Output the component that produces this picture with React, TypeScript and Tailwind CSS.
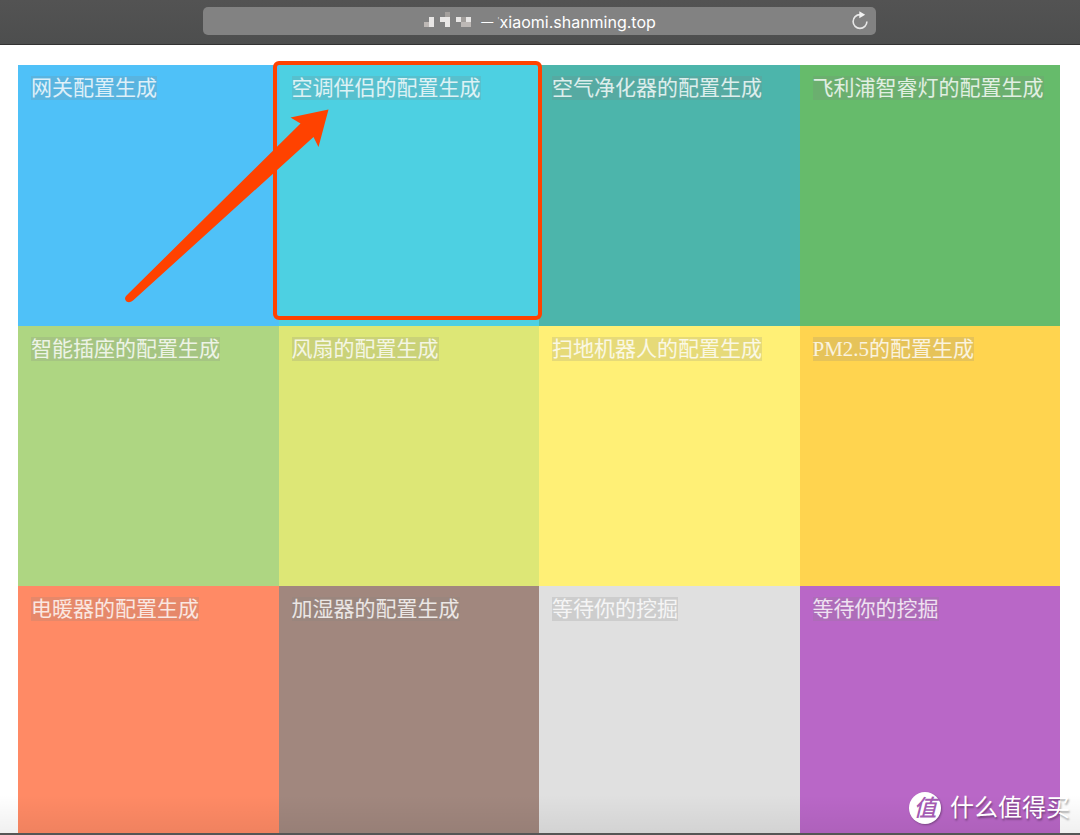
type Tile = { label: string; color: string; marked?: boolean };

const tiles: Tile[] = [
  { label: "网关配置生成", color: "bg-[#4fc1f8]" },
  { label: "空调伴侣的配置生成", color: "bg-[#4dd0e2]", marked: true },
  { label: "空气净化器的配置生成", color: "bg-[#4cb5ab]" },
  { label: "飞利浦智睿灯的配置生成", color: "bg-[#66bb6b]" },
  { label: "智能插座的配置生成", color: "bg-[#aed682]" },
  { label: "风扇的配置生成", color: "bg-[#dde776]" },
  { label: "扫地机器人的配置生成", color: "bg-[#fff076]" },
  { label: "PM2.5的配置生成", color: "bg-[#ffd44f]" },
  { label: "电暖器的配置生成", color: "bg-[#ff8a65]" },
  { label: "加湿器的配置生成", color: "bg-[#a1877e]" },
  { label: "等待你的挖掘", color: "bg-[#e0e0e0]" },
  { label: "等待你的挖掘", color: "bg-[#b967c7]" },
];

function MaskedTitle() {
  return (
    <svg width="50" height="20" viewBox="0 0 50 20" aria-hidden="true" shapeRendering="crispEdges">
      <path fill="#e8e6e5" d="M6 5h5v10H6zM17 5h10v5H17zM22 10h5v5h-5zM33 5h5v5h-5zM43 5h5v5h-5z" />
      <path fill="#bdb8b5" d="M1 10h5v5H1zM38 10h10v5H38z" />
      <path fill="#a39f9c" d="M22 0h5v5h-5zM38 5h5v5h-5z" />
    </svg>
  );
}

function ReloadIcon() {
  return (
    <svg width="18" height="20" viewBox="0 0 18 20" aria-hidden="true">
      <path d="M9 4.600A6.900 6.900 0 1 0 15.900 11.500" fill="none" stroke="#e8e8e8" strokeWidth="1.6" />
      <path d="M8.300 1.300 14.200 4.800 8.300 8.300z" fill="#f2f2f2" />
    </svg>
  );
}

function BrowserBar() {
  return (
    <header className="flex h-[45px] shrink-0 items-start border-b border-[#333] bg-linear-to-b from-[#535353] to-[#4d4e4e] pt-[7px] pr-[204px] pl-[203px]">
      <div className="relative flex h-7 w-full items-center justify-center rounded-[5px] bg-[#828282] text-base text-white">
        <div className="flex items-center pt-px">
          <MaskedTitle />
          <span className="ml-2 text-xs">—</span>
          <span className="ml-1 h-4 text-[8px] leading-3 text-white/70">'</span>
          <span>xiaomi.shanming.top</span>
        </div>
        <button type="button" aria-label="Reload" className="absolute right-[7px] bottom-[5px]">
          <ReloadIcon />
        </button>
      </div>
    </header>
  );
}

function Callout() {
  return (
    <>
      <div className="pointer-events-none absolute -top-1 -right-[3px] bottom-[6px] -left-[6px] z-10 rounded-md border-4 border-[#ff4200]" />
      <svg
        className="pointer-events-none absolute top-[43px] -left-[155px] z-10"
        width="206"
        height="196"
        viewBox="0 0 206 196"
        aria-hidden="true"
      >
        <path
          fill="#ff4200"
          d="M204.500 1.500 194.500 39 189.500 29 9 192.500Q5.500 195.500 2.500 193.500-.5 190.500 2.500 187.500L176.500 15.500 166.500 9.500z"
        />
      </svg>
    </>
  );
}

function Watermark() {
  return (
    <div className="absolute right-[10px] bottom-2 z-20 flex items-center gap-[9px] text-white">
      <span className="flex size-8 items-center justify-center rounded-full bg-white text-[23px] leading-none font-medium text-[#a45bb2] shadow-[1px_1px_2px_rgba(0,0,0,0.3)]">
        <span className="italic">值</span>
      </span>
      <span className="text-[24px] leading-[38px] [text-shadow:1px_2px_2px_rgba(0,0,0,0.35)]">什么值得买</span>
    </div>
  );
}

export default function App() {
  return (
    <div className="relative flex h-screen flex-col overflow-hidden bg-white font-['Inter','Noto_Sans_CJK_SC',sans-serif]">
      <BrowserBar />
      <main className="min-h-0 flex-1 overflow-hidden pt-5 pr-5 pl-[18px]">
        <div className="grid grid-cols-4">
          {tiles.map((tile, i) => (
            <section key={i} className={`relative aspect-square pt-[11px] pl-[13px] ${tile.color}`}>
              <h2 className="inline-block bg-[#808080]/20 font-['Liberation_Serif','Noto_Sans_CJK_SC',serif] text-[21px] leading-6 font-normal whitespace-nowrap text-white/80">
                {tile.label}
              </h2>
              {tile.marked && <Callout />}
            </section>
          ))}
        </div>
      </main>
      <div className="pointer-events-none absolute inset-x-0 bottom-0 h-10 border-b-2 border-[#555] bg-linear-to-b from-black/0 to-black/6" />
      <Watermark />
    </div>
  );
}
